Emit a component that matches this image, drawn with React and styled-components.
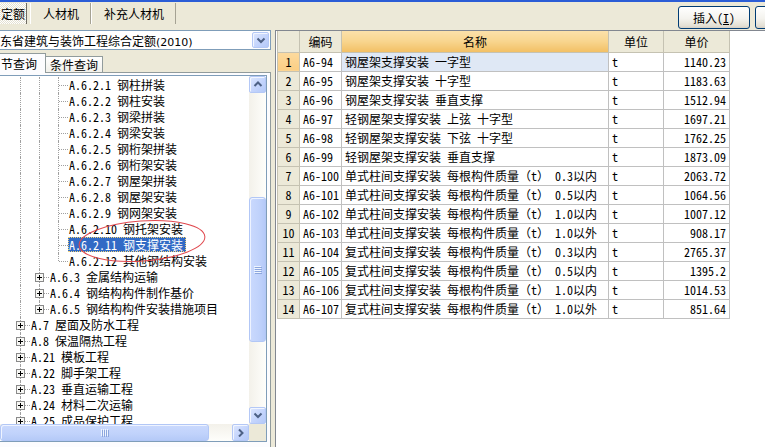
import React from "react";
import styled, { createGlobalStyle, css } from "styled-components";

const FONT = `"Noto Sans Mono CJK SC", "Noto Sans CJK SC", "Liberation Mono", monospace`;

const GlobalStyle = createGlobalStyle`
  html, body { margin: 0; padding: 0; background: #ECE9D8; }
  body { font-family: ${FONT}; font-size: 12px; color: #000; }
  * { box-sizing: border-box; }
`;

const Root = styled.div`
  position: relative;
  width: 765px;
  height: 447px;
  overflow: hidden;
  display: flex;
  flex-direction: column;
  background: #ECE9D8;
`;

const TitleEdge = styled.div`
  flex: none;
  height: 2px;
  background: #2B5DD6;
`;

const TopBar = styled.div`
  flex: none;
  height: 28px;
  display: flex;
  align-items: flex-start;
`;

const TabStrip = styled.div`
  display: flex;
  margin-top: 1px;
  margin-left: -12px;
`;

const TopTab = styled.div`
  height: 21px;
  display: flex;
  align-items: center;
  padding: 0 11px 0 12px;
  border-left: 1px solid #fff;
  border-right: 1px solid #A5A293;
  white-space: nowrap;
  ${(p) =>
    p.$active &&
    css`
      background: repeating-conic-gradient(#ffffff 0 25%, #E4E1D2 0 50%) 0 0 / 2px 2px;
      border-right-color: #6E6C62;
      margin-right: 3px;
      padding-right: 1px;
    `}
`;

const ButtonGroup = styled.div`
  margin-left: auto;
  margin-right: -62px;
  display: flex;
  gap: 5px;
  padding-top: 4px;
`;

const XPButton = styled.div`
  width: 72px;
  height: 23px;
  border: 1px solid #003C74;
  border-radius: 3px;
  background: linear-gradient(#FFFFFF, #F4F3EE 55%, #E3DFD4 90%, #D6D0C5);
  display: flex;
  align-items: center;
  justify-content: center;
  white-space: nowrap;
  u { text-decoration-color: #000; }
`;

const Main = styled.div`
  flex: 1;
  min-height: 0;
  display: flex;
`;

const LeftPanel = styled.div`
  flex: none;
  width: 271px;
  display: flex;
  flex-direction: column;
`;

const Combo = styled.div`
  flex: none;
  height: 20px;
  background: #fff;
  border: 1px solid #7F9DB9;
  border-left: none;
  display: flex;
  align-items: center;
  padding: 1px;
`;

const ComboText = styled.div`
  flex: 1;
  white-space: nowrap;
  overflow: hidden;
  margin-left: -1px;
`;

const Year = styled.span`
  font-family: "DejaVu Sans", "Liberation Sans", sans-serif;
  font-size: 11px;
`;

const ScrollBtn = styled.div`
  flex: none;
  width: ${(p) => p.$w || 17}px;
  height: ${(p) => p.$h || 17}px;
  border: 1px solid #B4C8F6;
  border-radius: 2px;
  background: linear-gradient(135deg, #DCE6FE, #C2D3FC 60%, #B4C9F8);
  box-shadow: inset 1px 1px 0 #F2F6FF;
  display: flex;
  align-items: center;
  justify-content: center;
`;

const SubTabs = styled.div`
  flex: none;
  height: 22px;
  display: flex;
  align-items: flex-end;
`;

const SubTab = styled.div`
  height: ${(p) => (p.$active ? 20 : 16)}px;
  display: flex;
  align-items: center;
  white-space: nowrap;
  border: 1px solid #919B9C;
  border-bottom: none;
  ${(p) =>
    p.$active
      ? css`
          background: #FCFCFE;
          border-left: none;
          padding: 0 8px 0 1px;
          height: 20px;
          position: relative;
          top: 1px;
        `
      : css`
          background: linear-gradient(#FFFFFF, #F1F0EA);
          padding: 0 4px;
          border-left: none;
        `}
`;

const TabPage = styled.div`
  flex: 1;
  min-height: 0;
  display: flex;
  background: #FCFCFE;
  border-top: 1px solid #919B9C;
  border-right: 1px solid #919B9C;
  padding: 2px 3px 5px 0;
`;

const TreeBox = styled.div`
  flex: 1;
  min-height: 0;
  background: #fff;
  border: 1px solid #7F9DB9;
  border-left: none;
  display: grid;
  grid-template-columns: 1fr 17px;
  grid-template-rows: 1fr 17px;
`;

const TreeContent = styled.div`
  overflow: hidden;
  padding-top: 1px;
`;

const TreeRow = styled.div`
  display: flex;
  align-items: flex-start;
  height: 16px;
  padding-left: 11px;
  white-space: nowrap;
`;

const Guide = styled.div`
  position: relative;
  flex: none;
  width: 19px;
  height: 16px;
  &::before {
    content: "";
    position: absolute;
    left: 9px;
    top: 0;
    height: ${(p) => (p.$kind === "end" ? 8 : 16)}px;
    border-left: 1px dotted #A0A0A0;
  }
  ${(p) =>
    p.$kind !== "pass" &&
    css`
      &::after {
        content: "";
        position: absolute;
        left: 10px;
        right: 0;
        top: 8px;
        border-top: 1px dotted #A0A0A0;
      }
    `}
`;

const ExpanderBox = styled.svg`
  position: absolute;
  left: 5px;
  top: 4px;
  z-index: 1;
`;

const NodeLabel = styled.div`
  height: 15px;
  line-height: 15px;
  padding: 0 3px 0 1px;
  ${(p) =>
    p.$selected &&
    css`
      background: #316AC5;
      color: #fff;
      outline: 1px dotted #F3D37A;
      outline-offset: -1px;
    `}
`;

const VScroll = styled.div`
  display: flex;
  flex-direction: column;
  background: linear-gradient(90deg, #F3F1EA, #FEFEFB);
`;

const HScroll = styled.div`
  display: flex;
  background: linear-gradient(#F3F1EA, #FEFEFB);
`;

const Gap = styled.div`
  flex: ${(p) => (p.$size ? `none` : 1)};
  ${(p) => (p.$vertical ? `height` : `width`)}: ${(p) => (p.$size ? `${p.$size}px` : `auto`)};
`;

const Thumb = styled.div`
  flex: none;
  ${(p) => (p.$vertical ? `height: ${p.$len}px;` : `width: ${p.$len}px;`)}
  border: 1px solid #B2C7F6;
  border-radius: 3px;
  background: ${(p) =>
    p.$vertical
      ? `linear-gradient(90deg, #CAD9FD, #C0D2FB 60%, #B5CAF8)`
      : `linear-gradient(#CAD9FD, #C0D2FB 60%, #B5CAF8)`};
  box-shadow: inset 1px 1px 0 #EEF3FF;
  display: flex;
  align-items: center;
  justify-content: center;
`;

const Corner = styled.div`
  background: #ECE9D8;
`;

const Splitter = styled.div`
  flex: none;
  width: 4px;
`;

const GridPanel = styled.div`
  flex: 1;
  background: #fff;
  border-left: 1px solid #828790;
  border-top: 1px solid #828790;
  padding: 0 0 0 1px;
  overflow: hidden;
`;

const Table = styled.table`
  border-collapse: collapse;
  table-layout: fixed;
  width: 452px;
  white-space: nowrap;
`;

const HeadCell = styled.th`
  height: 21px;
  padding: 0;
  font-weight: normal;
  text-align: center;
  border: 1px solid #C5C2B2;
  border-top: none;
  background: ${(p) =>
    p.$sorted ? `linear-gradient(#FBE1AA, #F8D58E 50%, #F2C065)` : `#ECE9D8`};
`;

const Cell = styled.td`
  height: 19px;
  padding: 0 3px;
  border: 1px solid #C0C0C0;
  overflow: hidden;
  text-align: ${(p) => p.$align || "left"};
  background: ${(p) => p.$bg || "#fff"};
`;

const NumCell = styled.td`
  height: 19px;
  padding: 0;
  text-align: center;
  border: 1px solid #C5C2B2;
  background: ${(p) => (p.$current ? `linear-gradient(#FCDA9E, #FBCE84)` : `#ECE9D8`)};
`;

const Annotation = styled.svg`
  position: absolute;
  left: 76px;
  top: 214px;
  pointer-events: none;
`;

const Chevron = ({ dir }) => {
  const d = {
    up: "M1.5 6 L5 2.5 L8.5 6",
    down: "M1.5 2.5 L5 6 L8.5 2.5",
    right: "M3 1.5 L6.5 5 L3 8.5",
  }[dir];
  return (
    <svg width="10" height="9" viewBox="0 0 10 9">
      <path d={d} fill="none" stroke="#4D6185" strokeWidth="2" />
    </svg>
  );
};

const Grip = ({ vertical }) =>
  vertical ? (
    <svg width="8" height="8" viewBox="0 0 8 8">
      {[0, 2, 4, 6].map((y) => (
        <g key={y}>
          <rect x="0" y={y} width="7" height="1" fill="#EEF4FE" />
          <rect x="1" y={y + 1} width="7" height="1" fill="#8CA6DE" />
        </g>
      ))}
    </svg>
  ) : (
    <svg width="8" height="8" viewBox="0 0 8 8">
      {[0, 2, 4, 6].map((x) => (
        <g key={x}>
          <rect x={x} y="0" width="1" height="7" fill="#EEF4FE" />
          <rect x={x + 1} y="1" width="1" height="7" fill="#8CA6DE" />
        </g>
      ))}
    </svg>
  );

const Expander = () => (
  <ExpanderBox width="9" height="9" viewBox="0 0 9 9">
    <rect x="0.5" y="0.5" width="8" height="8" fill="#F7F7F4" stroke="#8A8A8A" />
    <rect x="2" y="4" width="5" height="1" fill="#000" />
    <rect x="4" y="2" width="1" height="5" fill="#000" />
  </ExpanderBox>
);

const treeRows = [
  { d: 3, code: "A.6.2.1", name: "钢柱拼装" },
  { d: 3, code: "A.6.2.2", name: "钢柱安装" },
  { d: 3, code: "A.6.2.3", name: "钢梁拼装" },
  { d: 3, code: "A.6.2.4", name: "钢梁安装" },
  { d: 3, code: "A.6.2.5", name: "钢桁架拼装" },
  { d: 3, code: "A.6.2.6", name: "钢桁架安装" },
  { d: 3, code: "A.6.2.7", name: "钢屋架拼装" },
  { d: 3, code: "A.6.2.8", name: "钢屋架安装" },
  { d: 3, code: "A.6.2.9", name: "钢网架安装" },
  { d: 3, code: "A.6.2.10", name: "钢托架安装" },
  { d: 3, code: "A.6.2.11", name: "钢支撑安装", sel: true },
  { d: 3, code: "A.6.2.12", name: "其他钢结构安装", last: true },
  { d: 2, code: "A.6.3", name: "金属结构运输", box: true },
  { d: 2, code: "A.6.4", name: "钢结构构件制作基价", box: true },
  { d: 2, code: "A.6.5", name: "钢结构构件安装措施项目", box: true, last: true },
  { d: 1, code: "A.7", name: "屋面及防水工程", box: true },
  { d: 1, code: "A.8", name: "保温隔热工程", box: true },
  { d: 1, code: "A.21", name: "模板工程", box: true },
  { d: 1, code: "A.22", name: "脚手架工程", box: true },
  { d: 1, code: "A.23", name: "垂直运输工程", box: true },
  { d: 1, code: "A.24", name: "材料二次运输", box: true },
  { d: 1, code: "A.25", name: "成品保护工程", box: true },
];

const q = "每根构件质量（t）";
const gridRows = [
  ["A6-94", "钢屋架支撑安装 一字型", "1140.23"],
  ["A6-95", "钢屋架支撑安装 十字型", "1183.63"],
  ["A6-96", "钢屋架支撑安装 垂直支撑", "1512.94"],
  ["A6-97", "轻钢屋架支撑安装 上弦 十字型", "1697.21"],
  ["A6-98", "轻钢屋架支撑安装 下弦 十字型", "1762.25"],
  ["A6-99", "轻钢屋架支撑安装 垂直支撑", "1873.09"],
  ["A6-100", `单式柱间支撑安装 ${q} 0.3以内`, "2063.72"],
  ["A6-101", `单式柱间支撑安装 ${q} 0.5以内`, "1064.56"],
  ["A6-102", `单式柱间支撑安装 ${q} 1.0以内`, "1007.12"],
  ["A6-103", `单式柱间支撑安装 ${q} 1.0以外`, "908.17"],
  ["A6-104", `复式柱间支撑安装 ${q} 0.3以内`, "2765.37"],
  ["A6-105", `复式柱间支撑安装 ${q} 0.5以内`, "1395.2"],
  ["A6-106", `复式柱间支撑安装 ${q} 1.0以内`, "1014.53"],
  ["A6-107", `复式柱间支撑安装 ${q} 1.0以外`, "851.64"],
];

export default function App() {
  return (
    <Root>
      <GlobalStyle />
      <TitleEdge />
      <TopBar>
        <TabStrip>
          <TopTab $active>定额</TopTab>
          <TopTab>人材机</TopTab>
          <TopTab>补充人材机</TopTab>
        </TabStrip>
        <ButtonGroup>
          <XPButton>
            插入(<u>I</u>)
          </XPButton>
          <XPButton />
        </ButtonGroup>
      </TopBar>
      <Main>
        <LeftPanel>
          <Combo>
            <ComboText>
              东省建筑与装饰工程综合定额<Year>(2010)</Year>
            </ComboText>
            <ScrollBtn $w={17} $h={16}>
              <Chevron dir="down" />
            </ScrollBtn>
          </Combo>
          <SubTabs>
            <SubTab $active>节查询</SubTab>
            <SubTab>条件查询</SubTab>
          </SubTabs>
          <TabPage>
            <TreeBox>
              <TreeContent>
                {treeRows.map((r) => (
                  <TreeRow key={r.code}>
                    {Array.from({ length: r.d - 1 }).map((_, i) => (
                      <Guide key={i} $kind="pass" />
                    ))}
                    <Guide $kind={r.last ? "end" : "tee"}>{r.box && <Expander />}</Guide>
                    <NodeLabel $selected={r.sel}>
                      {r.code} {r.name}
                    </NodeLabel>
                  </TreeRow>
                ))}
              </TreeContent>
              <VScroll>
                <ScrollBtn>
                  <Chevron dir="up" />
                </ScrollBtn>
                <Gap $vertical $size={104} />
                <Thumb $vertical $len={145}>
                  <Grip vertical />
                </Thumb>
                <Gap $vertical />
                <ScrollBtn>
                  <Chevron dir="down" />
                </ScrollBtn>
              </VScroll>
              <HScroll>
                <Thumb $len={209}>
                  <Grip />
                </Thumb>
                <Gap />
                <ScrollBtn>
                  <Chevron dir="right" />
                </ScrollBtn>
              </HScroll>
              <Corner />
            </TreeBox>
          </TabPage>
        </LeftPanel>
        <Splitter />
        <GridPanel>
          <Table>
            <colgroup>
              <col style={{ width: 22 }} />
              <col style={{ width: 42 }} />
              <col style={{ width: 267 }} />
              <col style={{ width: 55 }} />
              <col style={{ width: 66 }} />
            </colgroup>
            <thead>
              <tr>
                <HeadCell />
                <HeadCell>编码</HeadCell>
                <HeadCell $sorted>名称</HeadCell>
                <HeadCell>单位</HeadCell>
                <HeadCell>单价</HeadCell>
              </tr>
            </thead>
            <tbody>
              {gridRows.map(([code, name, price], i) => (
                <tr key={code}>
                  <NumCell $current={i === 0}>{i + 1}</NumCell>
                  <Cell>{code}</Cell>
                  <Cell $bg={i === 0 ? "#DFE8F5" : undefined}>{name}</Cell>
                  <Cell>t</Cell>
                  <Cell $align="right">{price}</Cell>
                </tr>
              ))}
            </tbody>
          </Table>
        </GridPanel>
      </Main>
      <Annotation width="136" height="56" viewBox="0 0 136 56">
        <ellipse
          cx="66"
          cy="27"
          rx="63"
          ry="20"
          transform="rotate(-4 66 27)"
          fill="none"
          stroke="#E0484E"
          strokeWidth="1"
        />
      </Annotation>
    </Root>
  );
}
